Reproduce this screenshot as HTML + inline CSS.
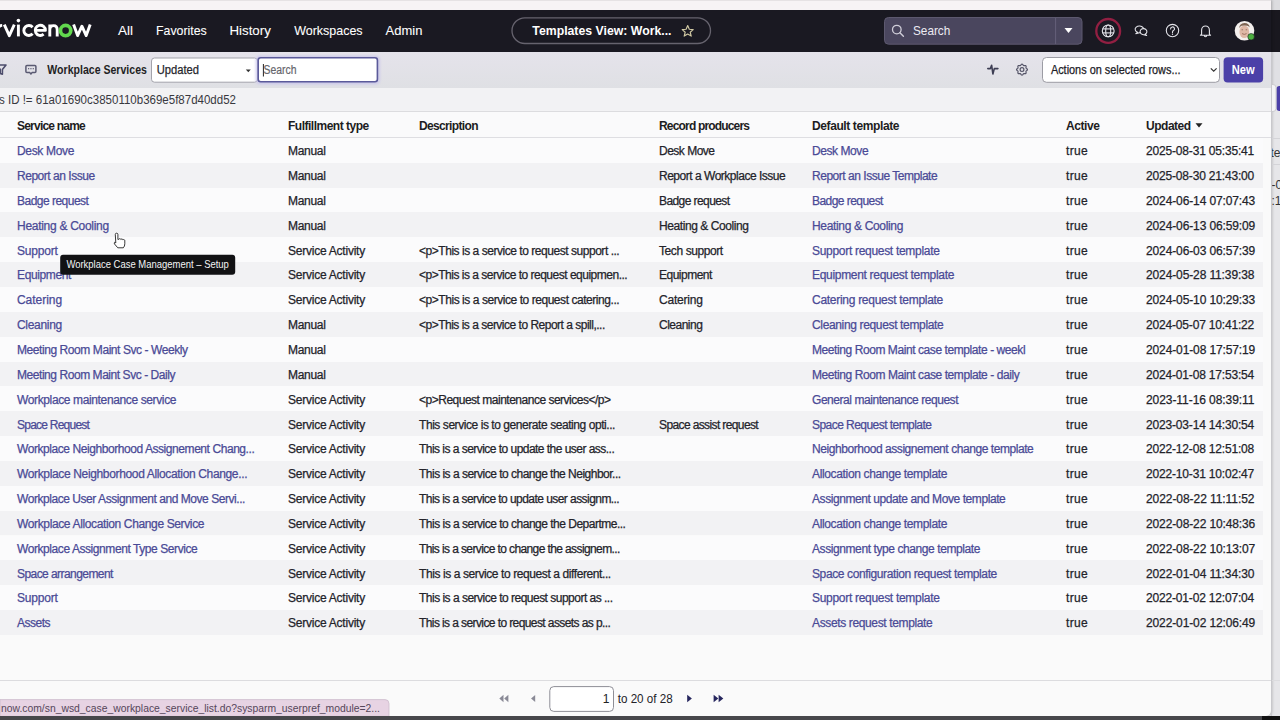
<!DOCTYPE html>
<html><head><meta charset="utf-8">
<style>
*{box-sizing:border-box;margin:0;padding:0}
html,body{width:1280px;height:720px;overflow:hidden;background:#3e3e42;font-family:"Liberation Sans",sans-serif;}
#back{position:absolute;left:1271px;top:0;width:9px;height:716px;background:linear-gradient(#dcdcdf 0,#dcdcdf 10px,#19181f 10px,#19181f 52px,#e0e0e4 52px,#e0e0e4 88px,#e6e6e9 88px)}
#win{position:absolute;left:0;top:0;width:1271px;height:716px;background:#fafafa;border-bottom-right-radius:5px;overflow:hidden;box-shadow:1px 0 3px rgba(0,0,0,.25)}
#topstrip{position:absolute;left:0;top:0;width:1271px;height:10px;background:#f7f3f5;border-top:1px solid #e6e2e4}
#hdr{position:absolute;left:0;top:10px;width:1280px;height:42px;background:#1a1922}
#toolbar{position:absolute;left:0;top:52px;width:1271px;height:36px;background:linear-gradient(#e5e3eb,#dfe0e4)}
#crumb{position:absolute;left:0;top:88px;width:1271px;height:24px;background:#f2f2f4;border-bottom:1px solid #dcdcdf}
#thead{position:absolute;left:0;top:112px;width:1271px;height:26px;background:#fafafb;border-bottom:1px solid #dedee2}
.th{position:absolute;top:113px;height:26px;line-height:26px;font-weight:bold;font-size:12px;color:#1d1d22;letter-spacing:-0.8px}
.row{position:absolute;left:0;width:1263px;height:24.85px}
.row.odd{background:#fbfbfc}
.row.even{background:#f2f2f4}
.c{position:absolute;height:24.85px;line-height:24.85px;font-size:12px;color:#23232a;white-space:nowrap;letter-spacing:-0.5px;margin-top:1.3px;-webkit-text-stroke:0.25px currentColor}
.c.d{letter-spacing:-0.12px}
.l{color:#4a4a96}
svg{position:absolute;left:0;top:0}
</style></head><body>
<div id="back"></div>
<div style="position:absolute;left:1255px;top:690px;width:25px;height:26px;background:#e6e6e9"></div>
<div id="win">
 <div id="hdr"></div>
 <div id="toolbar"></div>
 <div id="crumb"></div>
 <div id="thead"></div>
<div class="th" id="h_0" style="left:17px;letter-spacing:-0.782px">Service name</div>
<div class="th" id="h_1" style="left:288px;letter-spacing:-0.500px">Fulfillment type</div>
<div class="th" id="h_2" style="left:419px;letter-spacing:-0.650px">Description</div>
<div class="th" id="h_3" style="left:659px;letter-spacing:-0.827px">Record producers</div>
<div class="th" id="h_4" style="left:812px;letter-spacing:-0.393px">Default template</div>
<div class="th" id="h_5" style="left:1066px;letter-spacing:-0.420px">Active</div>
<div class="th" id="h_6" style="left:1146px;letter-spacing:-0.483px">Updated</div>
<div class="row odd" style="top:137.90px"></div>
<div class="c l" id="c0_0" style="left:17px;top:137.90px;letter-spacing:-0.325px">Desk Move</div>
<div class="c" id="c0_1" style="left:288px;top:137.90px;letter-spacing:-0.300px">Manual</div>
<div class="c" id="c0_3" style="left:659px;top:137.90px;letter-spacing:-0.500px">Desk Move</div>
<div class="c l" id="c0_4" style="left:812px;top:137.90px;letter-spacing:-0.425px">Desk Move</div>
<div class="c" id="c0_5" style="left:1066px;top:137.90px;letter-spacing:0.300px">true</div>
<div class="c d" id="c0_6" style="left:1146px;top:137.90px;letter-spacing:-0.176px">2025-08-31 05:35:41</div>
<div class="row even" style="top:162.75px"></div>
<div class="c l" id="c1_0" style="left:17px;top:162.75px;letter-spacing:-0.471px">Report an Issue</div>
<div class="c" id="c1_1" style="left:288px;top:162.75px;letter-spacing:-0.300px">Manual</div>
<div class="c" id="c1_3" style="left:659px;top:162.75px;letter-spacing:-0.483px">Report a Workplace Issue</div>
<div class="c l" id="c1_4" style="left:812px;top:162.75px;letter-spacing:-0.474px">Report an Issue Template</div>
<div class="c" id="c1_5" style="left:1066px;top:162.75px;letter-spacing:0.300px">true</div>
<div class="c d" id="c1_6" style="left:1146px;top:162.75px;letter-spacing:-0.176px">2025-08-30 21:43:00</div>
<div class="row odd" style="top:187.60px"></div>
<div class="c l" id="c2_0" style="left:17px;top:187.60px;letter-spacing:-0.517px">Badge request</div>
<div class="c" id="c2_1" style="left:288px;top:187.60px;letter-spacing:-0.300px">Manual</div>
<div class="c" id="c2_3" style="left:659px;top:187.60px;letter-spacing:-0.583px">Badge request</div>
<div class="c l" id="c2_4" style="left:812px;top:187.60px;letter-spacing:-0.550px">Badge request</div>
<div class="c" id="c2_5" style="left:1066px;top:187.60px;letter-spacing:0.300px">true</div>
<div class="c d" id="c2_6" style="left:1146px;top:187.60px;letter-spacing:-0.120px">2024-06-14 07:07:43</div>
<div class="row even" style="top:212.45px"></div>
<div class="c l" id="c3_0" style="left:17px;top:212.45px;letter-spacing:-0.287px">Heating &amp; Cooling</div>
<div class="c" id="c3_1" style="left:288px;top:212.45px;letter-spacing:-0.300px">Manual</div>
<div class="c" id="c3_3" style="left:659px;top:212.45px;letter-spacing:-0.425px">Heating &amp; Cooling</div>
<div class="c l" id="c3_4" style="left:812px;top:212.45px;letter-spacing:-0.337px">Heating &amp; Cooling</div>
<div class="c" id="c3_5" style="left:1066px;top:212.45px;letter-spacing:0.300px">true</div>
<div class="c d" id="c3_6" style="left:1146px;top:212.45px;letter-spacing:-0.120px">2024-06-13 06:59:09</div>
<div class="row odd" style="top:237.30px"></div>
<div class="c l" id="c4_0" style="left:17px;top:237.30px;letter-spacing:-0.200px">Support</div>
<div class="c" id="c4_1" style="left:288px;top:237.30px;letter-spacing:-0.233px">Service Activity</div>
<div class="c" id="c4_2" style="left:419px;top:237.30px;letter-spacing:-0.462px">&lt;p&gt;This is a service to request support ...</div>
<div class="c" id="c4_3" style="left:659px;top:237.30px;letter-spacing:-0.409px">Tech support</div>
<div class="c l" id="c4_4" style="left:812px;top:237.30px;letter-spacing:-0.300px">Support request template</div>
<div class="c" id="c4_5" style="left:1066px;top:237.30px;letter-spacing:0.300px">true</div>
<div class="c d" id="c4_6" style="left:1146px;top:237.30px;letter-spacing:-0.120px">2024-06-03 06:57:39</div>
<div class="row even" style="top:262.15px"></div>
<div class="c l" id="c5_0" style="left:17px;top:262.15px;letter-spacing:-0.375px">Equipment</div>
<div class="c" id="c5_1" style="left:288px;top:262.15px;letter-spacing:-0.233px">Service Activity</div>
<div class="c" id="c5_2" style="left:419px;top:262.15px;letter-spacing:-0.495px">&lt;p&gt;This is a service to request equipmen...</div>
<div class="c" id="c5_3" style="left:659px;top:262.15px;letter-spacing:-0.500px">Equipment</div>
<div class="c l" id="c5_4" style="left:812px;top:262.15px;letter-spacing:-0.308px">Equipment request template</div>
<div class="c" id="c5_5" style="left:1066px;top:262.15px;letter-spacing:0.300px">true</div>
<div class="c d" id="c5_6" style="left:1146px;top:262.15px;letter-spacing:-0.120px">2024-05-28 11:39:38</div>
<div class="row odd" style="top:287.00px"></div>
<div class="c l" id="c6_0" style="left:17px;top:287.00px;letter-spacing:-0.043px">Catering</div>
<div class="c" id="c6_1" style="left:288px;top:287.00px;letter-spacing:-0.233px">Service Activity</div>
<div class="c" id="c6_2" style="left:419px;top:287.00px;letter-spacing:-0.448px">&lt;p&gt;This is a service to request catering...</div>
<div class="c" id="c6_3" style="left:659px;top:287.00px;letter-spacing:-0.214px">Catering</div>
<div class="c l" id="c6_4" style="left:812px;top:287.00px;letter-spacing:-0.283px">Catering request template</div>
<div class="c" id="c6_5" style="left:1066px;top:287.00px;letter-spacing:0.300px">true</div>
<div class="c d" id="c6_6" style="left:1146px;top:287.00px;letter-spacing:-0.120px">2024-05-10 10:29:33</div>
<div class="row even" style="top:311.85px"></div>
<div class="c l" id="c7_0" style="left:17px;top:311.85px;letter-spacing:-0.300px">Cleaning</div>
<div class="c" id="c7_1" style="left:288px;top:311.85px;letter-spacing:-0.300px">Manual</div>
<div class="c" id="c7_2" style="left:419px;top:311.85px;letter-spacing:-0.500px">&lt;p&gt;This is a service to Report a spill,...</div>
<div class="c" id="c7_3" style="left:659px;top:311.85px;letter-spacing:-0.500px">Cleaning</div>
<div class="c l" id="c7_4" style="left:812px;top:311.85px;letter-spacing:-0.350px">Cleaning request template</div>
<div class="c" id="c7_5" style="left:1066px;top:311.85px;letter-spacing:0.300px">true</div>
<div class="c d" id="c7_6" style="left:1146px;top:311.85px;letter-spacing:-0.176px">2024-05-07 10:41:22</div>
<div class="row odd" style="top:336.70px"></div>
<div class="c l" id="c8_0" style="left:17px;top:336.70px;letter-spacing:-0.427px">Meeting Room Maint Svc - Weekly</div>
<div class="c" id="c8_1" style="left:288px;top:336.70px;letter-spacing:-0.300px">Manual</div>
<div class="c l" id="c8_4" style="left:812px;top:336.70px;letter-spacing:-0.423px">Meeting Room Maint case template - weekl</div>
<div class="c" id="c8_5" style="left:1066px;top:336.70px;letter-spacing:0.300px">true</div>
<div class="c d" id="c8_6" style="left:1146px;top:336.70px;letter-spacing:-0.120px">2024-01-08 17:57:19</div>
<div class="row even" style="top:361.55px"></div>
<div class="c l" id="c9_0" style="left:17px;top:361.55px;letter-spacing:-0.445px">Meeting Room Maint Svc - Daily</div>
<div class="c" id="c9_1" style="left:288px;top:361.55px;letter-spacing:-0.300px">Manual</div>
<div class="c l" id="c9_4" style="left:812px;top:361.55px;letter-spacing:-0.418px">Meeting Room Maint case template - daily</div>
<div class="c" id="c9_5" style="left:1066px;top:361.55px;letter-spacing:0.300px">true</div>
<div class="c d" id="c9_6" style="left:1146px;top:361.55px;letter-spacing:-0.176px">2024-01-08 17:53:54</div>
<div class="row odd" style="top:386.40px"></div>
<div class="c l" id="c10_0" style="left:17px;top:386.40px;letter-spacing:-0.371px">Workplace maintenance service</div>
<div class="c" id="c10_1" style="left:288px;top:386.40px;letter-spacing:-0.233px">Service Activity</div>
<div class="c" id="c10_2" style="left:419px;top:386.40px;letter-spacing:-0.494px">&lt;p&gt;Request maintenance services&lt;/p&gt;</div>
<div class="c l" id="c10_4" style="left:812px;top:386.40px;letter-spacing:-0.446px">General maintenance request</div>
<div class="c" id="c10_5" style="left:1066px;top:386.40px;letter-spacing:0.300px">true</div>
<div class="c d" id="c10_6" style="left:1146px;top:386.40px;letter-spacing:-0.064px">2023-11-16 08:39:11</div>
<div class="row even" style="top:411.25px"></div>
<div class="c l" id="c11_0" style="left:17px;top:411.25px;letter-spacing:-0.767px">Space Request</div>
<div class="c" id="c11_1" style="left:288px;top:411.25px;letter-spacing:-0.233px">Service Activity</div>
<div class="c" id="c11_2" style="left:419px;top:411.25px;letter-spacing:-0.438px">This service is to generate seating opti...</div>
<div class="c" id="c11_3" style="left:659px;top:411.25px;letter-spacing:-0.616px">Space assist request</div>
<div class="c l" id="c11_4" style="left:812px;top:411.25px;letter-spacing:-0.548px">Space Request template</div>
<div class="c" id="c11_5" style="left:1066px;top:411.25px;letter-spacing:0.300px">true</div>
<div class="c d" id="c11_6" style="left:1146px;top:411.25px;letter-spacing:-0.176px">2023-03-14 14:30:54</div>
<div class="row odd" style="top:436.10px"></div>
<div class="c l" id="c12_0" style="left:17px;top:436.10px;letter-spacing:-0.433px">Workplace Neighborhood Assignement Chang...</div>
<div class="c" id="c12_1" style="left:288px;top:436.10px;letter-spacing:-0.233px">Service Activity</div>
<div class="c" id="c12_2" style="left:419px;top:436.10px;letter-spacing:-0.533px">This is a service to update the user ass...</div>
<div class="c l" id="c12_4" style="left:812px;top:436.10px;letter-spacing:-0.438px">Neighborhood assignement change template</div>
<div class="c" id="c12_5" style="left:1066px;top:436.10px;letter-spacing:0.300px">true</div>
<div class="c d" id="c12_6" style="left:1146px;top:436.10px;letter-spacing:-0.176px">2022-12-08 12:51:08</div>
<div class="row even" style="top:460.95px"></div>
<div class="c l" id="c13_0" style="left:17px;top:460.95px;letter-spacing:-0.352px">Workplace Neighborhood Allocation Change...</div>
<div class="c" id="c13_1" style="left:288px;top:460.95px;letter-spacing:-0.233px">Service Activity</div>
<div class="c" id="c13_2" style="left:419px;top:460.95px;letter-spacing:-0.510px">This is a service to change the Neighbor...</div>
<div class="c l" id="c13_4" style="left:812px;top:460.95px;letter-spacing:-0.348px">Allocation change template</div>
<div class="c" id="c13_5" style="left:1066px;top:460.95px;letter-spacing:0.300px">true</div>
<div class="c d" id="c13_6" style="left:1146px;top:460.95px;letter-spacing:-0.176px">2022-10-31 10:02:47</div>
<div class="row odd" style="top:485.80px"></div>
<div class="c l" id="c14_0" style="left:17px;top:485.80px;letter-spacing:-0.448px">Workplace User Assignment and Move Servi...</div>
<div class="c" id="c14_1" style="left:288px;top:485.80px;letter-spacing:-0.233px">Service Activity</div>
<div class="c" id="c14_2" style="left:419px;top:485.80px;letter-spacing:-0.557px">This is a service to update user assignm...</div>
<div class="c l" id="c14_4" style="left:812px;top:485.80px;letter-spacing:-0.424px">Assignment update and Move template</div>
<div class="c" id="c14_5" style="left:1066px;top:485.80px;letter-spacing:0.300px">true</div>
<div class="c d" id="c14_6" style="left:1146px;top:485.80px;letter-spacing:-0.064px">2022-08-22 11:11:52</div>
<div class="row even" style="top:510.65px"></div>
<div class="c l" id="c15_0" style="left:17px;top:510.65px;letter-spacing:-0.365px">Workplace Allocation Change Service</div>
<div class="c" id="c15_1" style="left:288px;top:510.65px;letter-spacing:-0.233px">Service Activity</div>
<div class="c" id="c15_2" style="left:419px;top:510.65px;letter-spacing:-0.505px">This is a service to change the Departme...</div>
<div class="c l" id="c15_4" style="left:812px;top:510.65px;letter-spacing:-0.348px">Allocation change template</div>
<div class="c" id="c15_5" style="left:1066px;top:510.65px;letter-spacing:0.300px">true</div>
<div class="c d" id="c15_6" style="left:1146px;top:510.65px;letter-spacing:-0.120px">2022-08-22 10:48:36</div>
<div class="row odd" style="top:535.50px"></div>
<div class="c l" id="c16_0" style="left:17px;top:535.50px;letter-spacing:-0.425px">Workplace Assignment Type Service</div>
<div class="c" id="c16_1" style="left:288px;top:535.50px;letter-spacing:-0.233px">Service Activity</div>
<div class="c" id="c16_2" style="left:419px;top:535.50px;letter-spacing:-0.605px">This is a service to change the assignem...</div>
<div class="c l" id="c16_4" style="left:812px;top:535.50px;letter-spacing:-0.413px">Assignment type change template</div>
<div class="c" id="c16_5" style="left:1066px;top:535.50px;letter-spacing:0.300px">true</div>
<div class="c d" id="c16_6" style="left:1146px;top:535.50px;letter-spacing:-0.120px">2022-08-22 10:13:07</div>
<div class="row even" style="top:560.35px"></div>
<div class="c l" id="c17_0" style="left:17px;top:560.35px;letter-spacing:-0.562px">Space arrangement</div>
<div class="c" id="c17_1" style="left:288px;top:560.35px;letter-spacing:-0.233px">Service Activity</div>
<div class="c" id="c17_2" style="left:419px;top:560.35px;letter-spacing:-0.405px">This is a service to request a different...</div>
<div class="c l" id="c17_4" style="left:812px;top:560.35px;letter-spacing:-0.386px">Space configuration request template</div>
<div class="c" id="c17_5" style="left:1066px;top:560.35px;letter-spacing:0.300px">true</div>
<div class="c d" id="c17_6" style="left:1146px;top:560.35px;letter-spacing:-0.120px">2022-01-04 11:34:30</div>
<div class="row odd" style="top:585.20px"></div>
<div class="c l" id="c18_0" style="left:17px;top:585.20px;letter-spacing:-0.200px">Support</div>
<div class="c" id="c18_1" style="left:288px;top:585.20px;letter-spacing:-0.233px">Service Activity</div>
<div class="c" id="c18_2" style="left:419px;top:585.20px;letter-spacing:-0.510px">This is a service to request support as ...</div>
<div class="c l" id="c18_4" style="left:812px;top:585.20px;letter-spacing:-0.300px">Support request template</div>
<div class="c" id="c18_5" style="left:1066px;top:585.20px;letter-spacing:0.300px">true</div>
<div class="c d" id="c18_6" style="left:1146px;top:585.20px;letter-spacing:-0.176px">2022-01-02 12:07:04</div>
<div class="row even" style="top:610.05px"></div>
<div class="c l" id="c19_0" style="left:17px;top:610.05px;letter-spacing:-0.500px">Assets</div>
<div class="c" id="c19_1" style="left:288px;top:610.05px;letter-spacing:-0.233px">Service Activity</div>
<div class="c" id="c19_2" style="left:419px;top:610.05px;letter-spacing:-0.595px">This is a service to request assets as p...</div>
<div class="c l" id="c19_4" style="left:812px;top:610.05px;letter-spacing:-0.364px">Assets request template</div>
<div class="c" id="c19_5" style="left:1066px;top:610.05px;letter-spacing:0.300px">true</div>
<div class="c d" id="c19_6" style="left:1146px;top:610.05px;letter-spacing:-0.120px">2022-01-02 12:06:49</div>
</div>
<div id="topstrip"></div>
<svg width="1280" height="720" viewBox="0 0 1280 720" font-family="Liberation Sans, sans-serif">
<g fill="none" stroke="#ffffff" stroke-width="2.9" stroke-linejoin="round"><path d="M-2 36.5 V30 Q-2 25.6 2.2 25.4"/><path d="M4.3 24.6 L9.3 35.7 L14.3 24.6"/><path d="M18.4 24.6 V36.4"/><path d="M32.6 27.2 A5 5 0 1 0 32.6 33.8"/><path d="M35.6 30.4 H45.4 A5.1 5.1 0 1 0 43.6 34.2"/><path d="M49.8 24.4 V36.4 M49.8 30 Q49.8 25.6 53.6 25.6 Q57.2 25.6 57.2 30 V36.4"/><path d="M73.6 24.6 L77.6 35.6 L81.9 26.2 L86.2 35.6 L90.2 24.6"/></g>
<circle cx="18.4" cy="20.6" r="1.8" fill="#ffffff"/>
<circle cx="65.6" cy="30.6" r="5.15" fill="none" stroke="#62d84e" stroke-width="3.7"/>
<text stroke="#ffffff" stroke-width="0.08" x="118" y="35" font-size="13.2" font-weight="normal" fill="#ffffff" text-anchor="start" textLength="15" lengthAdjust="spacingAndGlyphs">All</text>
<text stroke="#ffffff" stroke-width="0.08" x="156" y="35" font-size="13.2" font-weight="normal" fill="#ffffff" text-anchor="start" textLength="50.8" lengthAdjust="spacingAndGlyphs">Favorites</text>
<text stroke="#ffffff" stroke-width="0.08" x="229.5" y="35" font-size="13.2" font-weight="normal" fill="#ffffff" text-anchor="start" textLength="41.3" lengthAdjust="spacingAndGlyphs">History</text>
<text stroke="#ffffff" stroke-width="0.08" x="294.2" y="35" font-size="13.2" font-weight="normal" fill="#ffffff" text-anchor="start" textLength="68.4" lengthAdjust="spacingAndGlyphs">Workspaces</text>
<text stroke="#ffffff" stroke-width="0.08" x="385.6" y="35" font-size="13.2" font-weight="normal" fill="#ffffff" text-anchor="start" textLength="36.8" lengthAdjust="spacingAndGlyphs">Admin</text>
<rect x="512" y="17.8" width="198.5" height="25.7" rx="12.85" fill="none" stroke="#66636e" stroke-width="1.3"/>
<text x="532.3" y="35" font-size="13" font-weight="bold" fill="#ffffff" text-anchor="start" textLength="139.2" lengthAdjust="spacingAndGlyphs">Templates View: Work...</text>
<path d="M687.7 25.6 L689.3 29.3 L693.2 29.6 L690.2 32.2 L691.2 36.1 L687.7 34 L684.2 36.1 L685.2 32.2 L682.2 29.6 L686.1 29.3 Z" fill="none" stroke="#d2caa4" stroke-width="1.15" stroke-linejoin="round"/>
<rect x="884.5" y="17.5" width="197.5" height="26.7" rx="4" fill="#4a465e" stroke="#5d596f" stroke-width="1"/>
<line x1="1055.6" y1="18" x2="1055.6" y2="44" stroke="#65617a" stroke-width="1"/>
<circle cx="896.8" cy="29.6" r="4.3" fill="none" stroke="#cfcdd8" stroke-width="1.3"/>
<line x1="899.9" y1="32.7" x2="903.4" y2="36.2" stroke="#cfcdd8" stroke-width="1.4" stroke-linecap="round"/>
<text x="913" y="35" font-size="13" font-weight="normal" fill="#ecebf2" text-anchor="start" textLength="37.3" lengthAdjust="spacingAndGlyphs">Search</text>
<path d="M1064.5 28 L1072.5 28 L1068.5 33 Z" fill="#ffffff"/>
<circle cx="1108.2" cy="30.9" r="11.9" fill="none" stroke="#921f42" stroke-width="2.3"/>
<g fill="none" stroke="#e4e4ea" stroke-width="1.1"><circle cx="1108.2" cy="30.9" r="5.9"/><ellipse cx="1108.2" cy="30.9" rx="2.5" ry="5.9"/><line x1="1102.4" y1="28.9" x2="1114" y2="28.9"/><line x1="1102.4" y1="32.9" x2="1114" y2="32.9"/></g>
<g fill="#1a1922" stroke="#e4e4ea" stroke-width="1.1" stroke-linejoin="round"><path d="M1137.6 32.3 A4.3 3.3 0 1 1 1140.6 32.5 L1135.8 33.6 Z"/><path d="M1145.0 34.3 A3.4 3.0 0 1 0 1142.6 34.5 L1146.6 35.5 Z"/></g>
<circle cx="1172.5" cy="30.6" r="6.2" fill="none" stroke="#e4e4ea" stroke-width="1.1"/>
<path d="M1170.6 28.9 a1.95 1.95 0 1 1 2.8 1.7 q-0.9 0.5 -0.9 1.5 v0.5" fill="none" stroke="#e4e4ea" stroke-width="1.1" stroke-linecap="round"/>
<circle cx="1172.5" cy="34.2" r="0.7" fill="#e4e4ea"/>
<path d="M1201.6 34.4 L1201.6 30.2 a3.9 4.2 0 0 1 7.8 0 L1209.4 34.4 L1210.6 35.2 L1200.4 35.2 Z M1204.3 35.6 a1.2 1.2 0 0 0 2.4 0" fill="none" stroke="#e4e4ea" stroke-width="1.1" stroke-linejoin="round"/>
<circle cx="1244.5" cy="30.7" r="9.8" fill="#f3efed"/>
<ellipse cx="1244.3" cy="31.8" rx="4.9" ry="6.3" fill="#dfb8a6"/>
<path d="M1239.2 28.2 q0.2 -5 5.3 -5.2 q4.8 0 5.2 4.6 q-1.2 -1.6 -2.4 -1.8 q-3 -0.6 -5.6 0 q-1.8 0.6 -2.5 2.4 Z" fill="#7d6352"/>
<g fill="#6a4e44" opacity="0.7"><ellipse cx="1242.3" cy="29.8" rx="0.9" ry="0.5"/><ellipse cx="1246.4" cy="29.8" rx="0.9" ry="0.5"/></g>
<path d="M1242 33.6 q2.3 1.6 4.6 0" fill="none" stroke="#9a6a5c" stroke-width="0.9"/>
<circle cx="1251.1" cy="36.8" r="3.3" fill="#4caf3f" stroke="#1a1922" stroke-width="0.6"/>
<path d="M-4 65 H6 L2.4 69.4 V74.2 L0.2 73.4 V69.4 Z" fill="none" stroke="#4d4d6c" stroke-width="1.6" stroke-linejoin="round"/>
<path d="M26.9 65.4 h8 a1 1 0 0 1 1 1 v5.2 a1 1 0 0 1 -1 1 h-2.9 l-1.1 1.4 l-1.1 -1.4 h-2.9 a1 1 0 0 1 -1 -1 v-5.2 a1 1 0 0 1 1 -1 Z" fill="none" stroke="#5a5a72" stroke-width="1.5" stroke-linejoin="round"/>
<g fill="#5a5a72"><rect x="28.1" y="68" width="1.1" height="1.3"/><rect x="30.4" y="68" width="1.1" height="1.3"/><rect x="32.7" y="68" width="1.1" height="1.3"/></g>
<text x="47.3" y="74.3" font-size="12.2" font-weight="bold" fill="#1f1f24" text-anchor="start" textLength="99.6" lengthAdjust="spacingAndGlyphs">Workplace Services</text>
<rect x="151.5" y="58" width="106" height="24.2" rx="3" fill="#ffffff" stroke="#a3a3ab" stroke-width="1"/>
<text x="156.7" y="74.4" font-size="12.5" font-weight="normal" fill="#26262c" text-anchor="start" textLength="42.3" lengthAdjust="spacingAndGlyphs" stroke="#26262c" stroke-width="0.25">Updated</text>
<path d="M245.8 69.6 L250.8 69.6 L248.3 72.2 Z" fill="#333"/>
<defs><filter id="gl" x="-20%" y="-50%" width="140%" height="200%"><feGaussianBlur stdDeviation="1.6"/></filter></defs><rect x="256" y="56" width="123.5" height="28" rx="4" fill="#c8c4ea" filter="url(#gl)"/>
<rect x="258.2" y="57.8" width="119.2" height="24" rx="2.5" fill="#ffffff" stroke="#5b5a9a" stroke-width="1.6"/>
<line x1="263.4" y1="64" x2="263.4" y2="76.5" stroke="#222" stroke-width="1"/>
<text x="263.6" y="74.4" font-size="12.5" font-weight="normal" fill="#66666c" text-anchor="start" textLength="33" lengthAdjust="spacingAndGlyphs" stroke="#66666c" stroke-width="0.2">Search</text>
<path d="M987.8 68.6 L990.4 68.6 L991.6 65.2 L992.9 74 L994.3 68.6 L997.9 68.6" fill="none" stroke="#3e3e54" stroke-width="1.6" stroke-linejoin="round" stroke-linecap="round"/>
<circle cx="1022" cy="69.6" r="1.9" fill="none" stroke="#555568" stroke-width="1.2"/>
<path d="M1027.45 69.60 L1027.36 69.95 L1027.13 70.28 L1026.81 70.56 L1026.47 70.80 L1026.19 71.02 L1026.02 71.26 L1025.97 71.56 L1026.01 71.91 L1026.07 72.32 L1026.11 72.75 L1026.04 73.14 L1025.85 73.45 L1025.54 73.64 L1025.15 73.71 L1024.72 73.67 L1024.31 73.61 L1023.96 73.57 L1023.66 73.62 L1023.42 73.79 L1023.20 74.07 L1022.96 74.41 L1022.68 74.73 L1022.35 74.96 L1022.00 75.05 L1021.65 74.96 L1021.32 74.73 L1021.04 74.41 L1020.80 74.07 L1020.58 73.79 L1020.34 73.62 L1020.04 73.57 L1019.69 73.61 L1019.28 73.67 L1018.85 73.71 L1018.46 73.64 L1018.15 73.45 L1017.96 73.14 L1017.89 72.75 L1017.93 72.32 L1017.99 71.91 L1018.03 71.56 L1017.98 71.26 L1017.81 71.02 L1017.53 70.80 L1017.19 70.56 L1016.87 70.28 L1016.64 69.95 L1016.55 69.60 L1016.64 69.25 L1016.87 68.92 L1017.19 68.64 L1017.53 68.40 L1017.81 68.18 L1017.98 67.94 L1018.03 67.64 L1017.99 67.29 L1017.93 66.88 L1017.89 66.45 L1017.96 66.06 L1018.15 65.75 L1018.46 65.56 L1018.85 65.49 L1019.28 65.53 L1019.69 65.59 L1020.04 65.63 L1020.34 65.58 L1020.58 65.41 L1020.80 65.13 L1021.04 64.79 L1021.32 64.47 L1021.65 64.24 L1022.00 64.15 L1022.35 64.24 L1022.68 64.47 L1022.96 64.79 L1023.20 65.13 L1023.42 65.41 L1023.66 65.58 L1023.96 65.63 L1024.31 65.59 L1024.72 65.53 L1025.15 65.49 L1025.54 65.56 L1025.85 65.75 L1026.04 66.06 L1026.11 66.45 L1026.07 66.88 L1026.01 67.29 L1025.97 67.64 L1026.02 67.94 L1026.19 68.18 L1026.47 68.40 L1026.81 68.64 L1027.13 68.92 L1027.36 69.25 L1027.45 69.60 Z" fill="none" stroke="#555568" stroke-width="1.2" stroke-linejoin="round"/>
<rect x="1042.5" y="57.5" width="177" height="24.8" rx="4" fill="#ffffff" stroke="#9c9ca4" stroke-width="1"/>
<text x="1050.9" y="74.4" font-size="12.5" font-weight="normal" fill="#202026" text-anchor="start" textLength="129.6" lengthAdjust="spacingAndGlyphs" stroke="#202026" stroke-width="0.25">Actions on selected rows...</text>
<path d="M1210.8 68.3 L1213.7 71.2 L1216.6 68.3" fill="none" stroke="#333" stroke-width="1.2"/>
<rect x="1223.6" y="57.2" width="39.5" height="25.3" rx="4" fill="#4b40a8"/>
<text x="1231.8" y="74.4" font-size="12.5" font-weight="bold" fill="#ffffff" text-anchor="start" textLength="22.9" lengthAdjust="spacingAndGlyphs">New</text>
<text x="-1" y="104.3" font-size="12" font-weight="normal" fill="#38383e" text-anchor="start" textLength="237" lengthAdjust="spacingAndGlyphs">s ID != 61a01690c3850110b369e5f87d40dd52</text>
<line x1="0" y1="680.5" x2="1280" y2="680.5" stroke="#dcdcdf" stroke-width="1"/>
<g fill="#8a8a96"><path d="M503.5 694.8 L499.3 698.5 L503.5 702.2 Z"/><path d="M508.4 694.8 L504.2 698.5 L508.4 702.2 Z"/><path d="M535.2 695 L531 698.5 L535.2 702 Z"/></g>
<rect x="549.8" y="686.6" width="63.7" height="24.8" rx="4" fill="#ffffff" stroke="#8e8e96" stroke-width="1"/>
<text x="609.5" y="703" font-size="12" font-weight="normal" fill="#222" text-anchor="end">1</text>
<text x="617.7" y="703" font-size="12" font-weight="normal" fill="#222228" text-anchor="start" textLength="55" lengthAdjust="spacingAndGlyphs">to 20 of 28</text>
<g fill="#26265e"><path d="M687.2 694.8 L691.9 698.5 L687.2 702.2 Z"/><path d="M713.6 694.8 L718.3 698.5 L713.6 702.2 Z"/><path d="M718.6 694.8 L723.3 698.5 L718.6 702.2 Z"/></g>
<path d="M0 699.6 H385 a4 4 0 0 1 4 4 V716.4 H0 Z" fill="#e7d3e3" stroke="#cdbccb" stroke-width="0.8"/>
<text x="1" y="712" font-size="11.5" font-weight="normal" fill="#55465a" text-anchor="start" textLength="379" lengthAdjust="spacingAndGlyphs">now.com/sn_wsd_case_workplace_service_list.do?sysparm_userpref_module=2...</text>
<rect x="0" y="716" width="1280" height="4" fill="#47474b"/>
<rect x="1262" y="716" width="18" height="4" fill="#111"/>
<rect x="60.2" y="254.7" width="175" height="20" rx="3" fill="#121214"/>
<text x="66.4" y="268.2" font-size="10.8" font-weight="normal" fill="#f4f4f4" text-anchor="start" textLength="162.5" lengthAdjust="spacingAndGlyphs">Workplace Case Management – Setup</text>
<path d="M115.3 234.5 a1.3 1.3 0 0 1 2.6 0 v5 l1 -0.3 a1.1 1.1 0 0 1 2 0.3 a1.1 1.1 0 0 1 2 0.4 a1.1 1.1 0 0 1 1.9 0.7 v3.2 q0 2.5 -1.5 4 h-5.5 l-3.3 -3.8 q-0.8 -1.2 0.3 -1.8 l1 0.7 Z" fill="#ffffff" stroke="#222" stroke-width="0.9" stroke-linejoin="round"/>
<defs><clipPath id="rs"><rect x="1271.5" y="0" width="9" height="716"/></clipPath></defs>
<g clip-path="url(#rs)">
<rect x="1276.5" y="86" width="8" height="25" rx="3" fill="#4b40a8"/>
<rect x="1266" y="84.5" width="10" height="27" rx="3" fill="#f4f4f6" stroke="#c4c4c8" stroke-width="0.8"/>
<line x1="1271" y1="138.5" x2="1280" y2="138.5" stroke="#d4d4d8" stroke-width="1"/>
<line x1="1271" y1="164.5" x2="1280" y2="164.5" stroke="#d4d4d8" stroke-width="1"/>
<text x="1270.5" y="156.5" font-size="12" font-weight="normal" fill="#333" text-anchor="start">te</text>
<text x="1271.5" y="189" font-size="12" font-weight="normal" fill="#333" text-anchor="start">-0</text>
<text x="1271.5" y="204.5" font-size="12" font-weight="normal" fill="#333" text-anchor="start">:1</text>
</g>
<line x1="1271.5" y1="52" x2="1271.5" y2="716" stroke="#c8c8cc" stroke-width="1"/>
<path d="M1195.5 123.2 L1202.5 123.2 L1199 127.4 Z" fill="#222"/>
</svg>
</body></html>
